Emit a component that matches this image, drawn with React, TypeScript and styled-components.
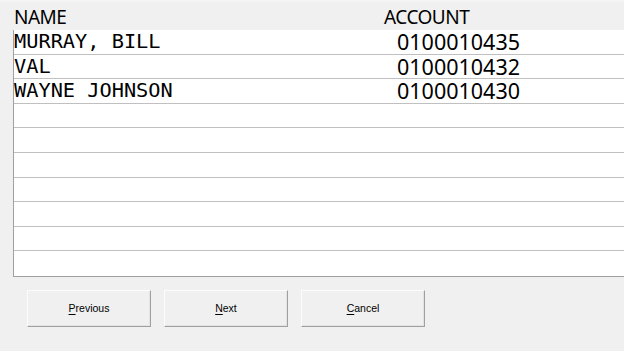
import styled, { createGlobalStyle } from "styled-components";

interface AccountRow {
  name: string;
  account: string;
}

const rows: AccountRow[] = [
  { name: "MURRAY, BILL", account: "0100010435" },
  { name: "VAL", account: "0100010432" },
  { name: "WAYNE JOHNSON", account: "0100010430" },
];

const TOTAL_ROWS = 10;

const GlobalStyle = createGlobalStyle`
  html, body {
    margin: 0;
    padding: 0;
    background: #f0f0f0;
  }
`;

export default function App() {
  const filled: (AccountRow | null)[] = [...rows];
  while (filled.length < TOTAL_ROWS) filled.push(null);

  return (
    <>
      <GlobalStyle />
      <Page>
        <Header>
          <HeaderCell>NAME</HeaderCell>
          <HeaderCell>ACCOUNT</HeaderCell>
        </Header>
        <Table>
          {filled.map((row, i) => (
            <Row key={i} $last={i === TOTAL_ROWS - 1}>
              <NameCell>{row?.name}</NameCell>
              <AccountCell>{row?.account}</AccountCell>
            </Row>
          ))}
        </Table>
        <ButtonBar>
          <Button>
            <u>P</u>revious
          </Button>
          <Button>
            <u>N</u>ext
          </Button>
          <Button>
            <u>C</u>ancel
          </Button>
        </ButtonBar>
      </Page>
    </>
  );
}

const Page = styled.div`
  width: 624px;
  height: 351px;
  background: #f0f0f0;
  display: flex;
  flex-direction: column;
  overflow: hidden;
`;

const Header = styled.div`
  height: 30px;
  display: grid;
  grid-template-columns: 370px 1fr;
  padding-left: 14px;
  box-sizing: border-box;
  border-top: 2px solid #f4f4f4;
`;

const HeaderCell = styled.div`
  font-family: "Noto Sans", "Open Sans", sans-serif;
  font-size: 19px;
  letter-spacing: -0.5px;
  line-height: 26px;
  padding-top: 2px;
  color: #000;
`;

const Table = styled.div`
  margin-left: 13px;
  background: #fff;
  border-left: 1px solid #a0a0a0;
  border-bottom: 1px solid #a0a0a0;
  display: flex;
  flex-direction: column;
`;

const Row = styled.div<{ $last?: boolean }>`
  height: 24.6px;
  box-sizing: border-box;
  display: grid;
  grid-template-columns: 370px 1fr;
  align-items: center;
  border-bottom: ${(p) => (p.$last ? "none" : "1px solid #c0c0c0")};
`;

const NameCell = styled.div`
  font-family: "DejaVu Sans Mono", "Liberation Mono", monospace;
  font-size: 20.3px;
  line-height: 23px;
  color: #000;
  white-space: pre;
`;

const AccountCell = styled.div`
  font-family: "Noto Sans", "Open Sans", sans-serif;
  font-size: 21.5px;
  line-height: 23px;
  color: #000;
  padding-left: 13px;
`;

const ButtonBar = styled.div`
  display: flex;
  gap: 13px;
  padding: 13px 0 0 27px;
`;

const Button = styled.button`
  width: 124px;
  height: 37px;
  background: #f0f0f0;
  border-style: solid;
  border-width: 1px;
  border-color: #fcfcfc #a0a0a0 #a0a0a0 #fcfcfc;
  box-shadow: inset -1px -1px 0 #e3e3e3;
  font-family: "Liberation Sans", Arial, sans-serif;
  font-size: 10.5px;
  color: #000;
  padding: 0;
  display: flex;
  align-items: center;
  justify-content: center;

  u {
    text-decoration-thickness: 1px;
    text-underline-offset: 2px;
  }
`;
